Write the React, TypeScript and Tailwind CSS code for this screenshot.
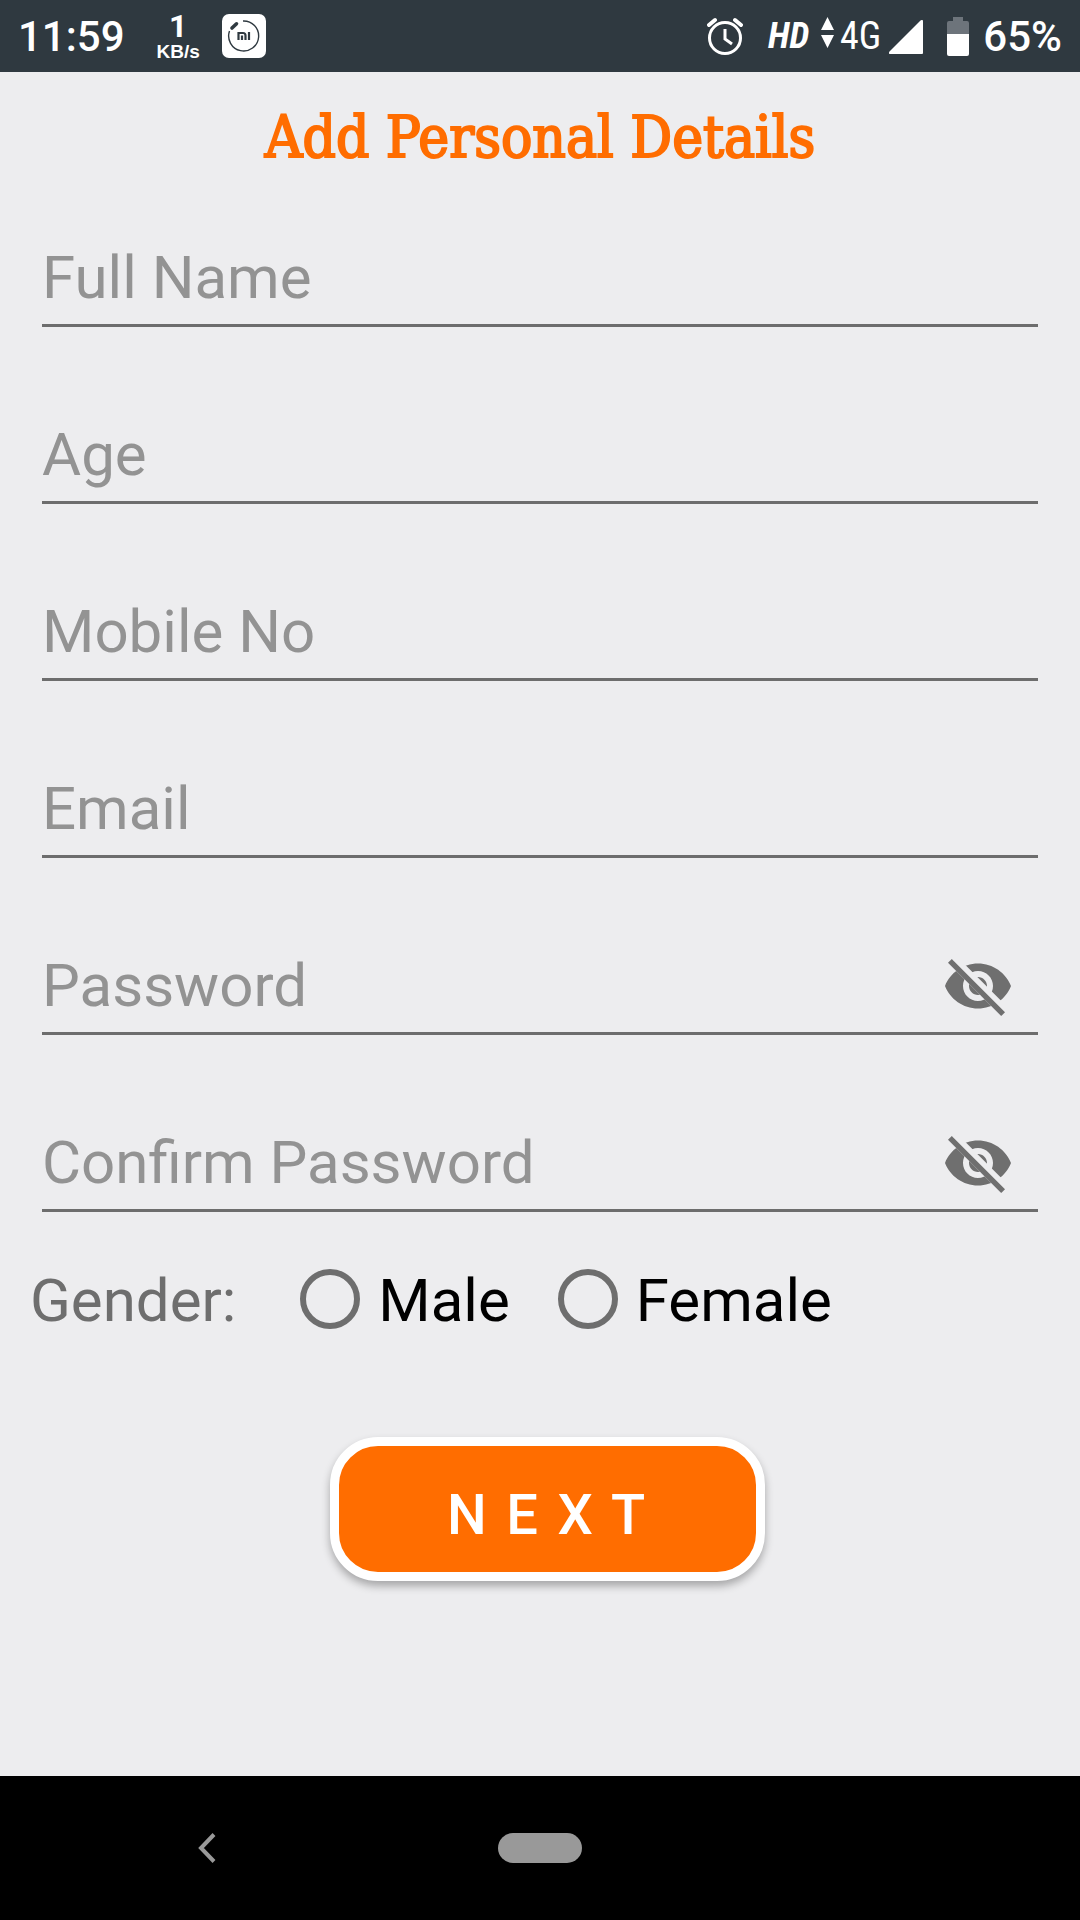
import { useState } from "react";

type FieldProps = {
  id: string;
  label: string;
  type?: string;
};

const textInput =
  "h-[85px] w-full border-b-[3px] border-[#6d6d6d] bg-transparent pb-3 text-[60px] leading-[70px] text-black outline-none placeholder:text-[#939393] placeholder:opacity-100";

function Field({ id, label, type = "text" }: FieldProps) {
  return <input id={id} name={id} type={type} aria-label={label} placeholder={label} className={textInput} />;
}

function PasswordField({ id, label }: FieldProps) {
  const [shown, setShown] = useState(false);
  return (
    <div className="relative">
      <Field id={id} label={label} type={shown ? "text" : "password"} />
      <button
        type="button"
        aria-label={`Show ${label}`}
        onClick={() => setShown(!shown)}
        className="absolute top-0 right-6 size-[72px]"
      >
        <svg viewBox="0 0 24 24" className="size-full" fill="#6f6f6f">
          <clipPath id={`${id}-clip`}>
            <path d="M2,4.27 L19.73,22 L22.27,19.46 L4.54,1.73 L4.54,1 L23,1 L23,23 L1,23 L1,4.27 Z" />
          </clipPath>
          <path
            clipPath={`url(#${id}-clip)`}
            fillRule="evenodd"
            d="M12,4.5C7,4.5 2.73,7.61 1,12c1.73,4.39 6,7.5 11,7.5s9.27,-3.11 11,-7.5c-1.73,-4.39 -6,-7.5 -11,-7.5zM12,17c-2.76,0 -5,-2.24 -5,-5s2.24,-5 5,-5 5,2.24 5,5 -2.24,5 -5,5zM12,9c-1.66,0 -3,1.34 -3,3s1.34,3 3,3 3,-1.34 3,-3 -1.34,-3 -3,-3z"
          />
          <path d="M3.27,4.27L19.74,20.74" stroke="#6f6f6f" strokeWidth="1.8" strokeLinecap="square" />
        </svg>
      </button>
    </div>
  );
}

function Radio({ value }: { value: string }) {
  return (
    <label className="flex items-center gap-[18px] text-black">
      <input
        type="radio"
        name="gender"
        value={value}
        className="mb-1 size-[60px] appearance-none rounded-full border-[6px] border-[#6e6e6e] checked:border-[#ff6d00] checked:bg-[#ff6d00] checked:bg-clip-content checked:p-2"
      />
      {value}
    </label>
  );
}

function StatusBar() {
  return (
    <header className="flex h-[72px] items-center justify-between bg-[#2f3940] pr-[18px] pl-[18px] text-[42px] leading-[48px] font-medium text-white">
      <div className="flex items-center">
        <span className="pt-0.5">11:59</span>
        <span className="ml-8 flex flex-col items-center font-bold">
          <span className="text-[32px] leading-8">1</span>
          <span className="font-['Liberation_Sans',sans-serif] text-[19px] leading-5">KB/s</span>
        </span>
        <svg viewBox="0 0 44 44" className="ml-[22px] size-11">
          <rect width="44" height="44" rx="7" fill="#fff" />
          <path d="M21 7A15 15 0 1 1 7.500 17" fill="none" stroke="#2f3940" strokeWidth="1.4" />
          <path d="M10 14L14.500 9.800" stroke="#2f3940" strokeWidth="3.600" strokeLinecap="round" />
          <path
            d="M16.500 26v-7h4.500q2.500 0 2.500 2.500V26M20 21.500V26M27 18v8"
            fill="none"
            stroke="#2f3940"
            strokeWidth="2.200"
          />
        </svg>
      </div>
      <div className="flex items-center">
        <svg viewBox="0 0 36 40" className="h-10 w-9" fill="none" stroke="#fff" strokeWidth="3">
          <circle cx="18" cy="22" r="15.5" />
          <path d="M18 13v10l7 5" />
          <path d="M2 9L8 4M34 9L28 4" strokeWidth="4" strokeLinecap="round" />
        </svg>
        <span className="ml-[25px] text-[36px] font-bold italic font-['Roboto_Condensed',Roboto,sans-serif]">HD</span>
        <svg viewBox="0 0 13 32" className="mr-1.5 mb-1.5 ml-3 h-8 w-[13px]" fill="#fff">
          <path d="M6.500 0L13 13H0zM0 18h13L6.500 31z" />
        </svg>
        <span className="text-[38px] font-normal font-['Roboto_Condensed',Roboto,sans-serif]">4G</span>
        <svg viewBox="0 0 34 34" className="ml-2 mt-0.5 size-[34px]" fill="#fff">
          <path d="M31.500 0.500Q34 -1 34 1.500V33q0 1-1 1H1.500Q-1 34 0.500 31.500z" />
        </svg>
        <svg viewBox="0 0 22 39" className="ml-6 h-[39px] w-[22px]">
          <path d="M6 0h10v4h4q2 0 2 2v11H0V6q0-2 2-2h4z" fill="#6d747b" />
          <path d="M0 17h22v20q0 2-2 2H2q-2 0-2-2z" fill="#fff" />
        </svg>
        <span className="ml-3.5 pt-0.5">65%</span>
      </div>
    </header>
  );
}

export default function App() {
  return (
    <div className="flex min-h-screen flex-col bg-[#ededef] font-[Roboto,sans-serif]">
      <StatusBar />
      <main className="flex-1 pb-10">
        <h1 className="mt-[30px] text-center font-['DejaVu_Serif_Condensed','DejaVu_Serif',serif] text-[58px] leading-[70px] text-[#ff6d00] [-webkit-text-stroke:2px_#ff6d00]">
          Add Personal Details
        </h1>
        <form className="mt-[70px]" onSubmit={(e) => e.preventDefault()}>
          <div className="flex flex-col gap-[92px] px-[42px]">
            <Field id="name" label="Full Name" />
            <Field id="age" label="Age" />
            <Field id="mobile" label="Mobile No" />
            <Field id="email" label="Email" type="email" />
            <PasswordField id="password" label="Password" />
            <PasswordField id="confirm" label="Confirm Password" />
          </div>
          <fieldset aria-label="Gender" className="mt-[54px] flex items-center px-[30px] text-[60px] leading-[70px]">
            <span className="text-[#6e6e6e]">Gender:</span>
            <div className="ml-16 flex gap-12">
              <Radio value="Male" />
              <Radio value="Female" />
            </div>
          </fieldset>
          <div className="mt-[101px] flex justify-center pl-[15px]">
            <button
              type="submit"
              className="h-36 w-[435px] rounded-[48px] border-[9px] border-white bg-[#ff6d00] pt-3 text-[56px] leading-[66px] font-medium tracking-wider text-white shadow-[0_5px_8px_rgba(0,0,0,0.3)]"
            >
              N E X T
            </button>
          </div>
        </form>
      </main>
      <nav aria-label="System" className="grid h-36 grid-cols-[1fr_auto_1fr] items-center bg-black">
        <button type="button" aria-label="Back" className="ml-[198px] w-[18px]">
          <svg viewBox="0 0 18 30" className="h-[30px] w-[18px]" fill="none" stroke="#999" strokeWidth="4">
            <path d="M16 1.500L3 15L16 28.500" />
          </svg>
        </button>
        <button type="button" aria-label="Home" className="h-[30px] w-21 rounded-full bg-[#999]" />
      </nav>
    </div>
  );
}
